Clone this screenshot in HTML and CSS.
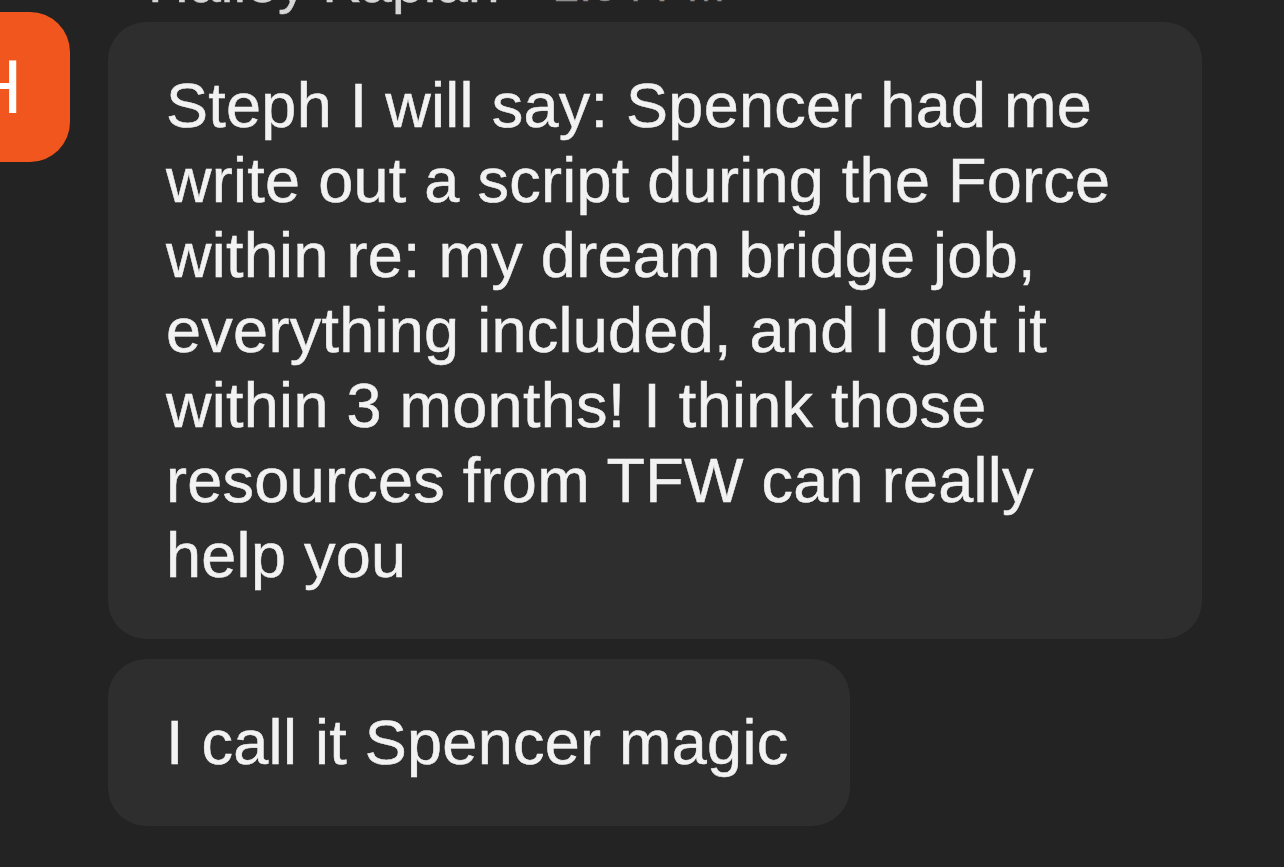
FILE: index.html
```html
<!DOCTYPE html>
<html lang="en">
<head>
<meta charset="utf-8">
<title>Chat</title>
<link rel="stylesheet" href="styles.css">
</head>
<body>
  <div class="thread">
    <div class="avatar">H</div>
    <div class="messages">
      <div class="meta">
        <span class="name">Hailey Kaplan</span>
        <span class="time">2:04 PM</span>
      </div>
      <div class="bubble wide">Steph I will say: Spencer had me write out a script during the Force within re: my dream bridge job, everything included, and I got it within 3 months! I think those resources from TFW can really help you</div>
      <div class="bubble">I call it Spencer magic</div>
    </div>
  </div>
</body>
</html>
```

FILE: styles.css
```css
html, body {
  margin: 0;
  padding: 0;
  background: #232323;
  overflow: hidden;
}

body {
  width: 1284px;
  height: 867px;
  font-family: "Liberation Sans", Arial, sans-serif;
  color: #f2f2f2;
}

.thread {
  display: flex;
  align-items: flex-start;
}

.avatar {
  flex: none;
  width: 150px;
  height: 150px;
  margin-left: -80px;
  margin-top: 12px;
  border-radius: 40px;
  background: #f2561f;
  color: #ffffff;
  font-size: 76px;
  line-height: 150px;
  text-align: center;
}

.messages {
  flex: 1;
  margin-left: 38px;
  display: flex;
  flex-direction: column;
  align-items: flex-start;
  gap: 20px;
}

.meta {
  margin-top: -46px;
  margin-bottom: -9px;
  height: 57px;
  padding-left: 40px;
  display: flex;
  align-items: baseline;
  gap: 54px;
  font-size: 57px;
  line-height: 57px;
  white-space: nowrap;
  -webkit-text-stroke: 0.4px currentColor;
}

.name {
  color: #d6d6d6;
}

.time {
  color: #8e8e8e;
  font-size: 46px;
  position: relative;
  top: -1px;
}

.bubble {
  background: #2e2e2e;
  border-radius: 38px;
  padding: 46px 62px 46px 58px;
  font-size: 63px;
  line-height: 75px;
  letter-spacing: 0.27px;
  -webkit-text-stroke: 0.5px currentColor;
}

.bubble.wide {
  width: 1094px;
  box-sizing: border-box;
  padding-right: 58px;
}
```
